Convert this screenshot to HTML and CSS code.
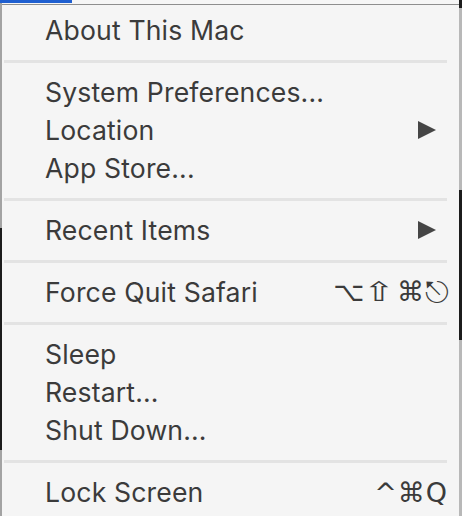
FILE: index.html
```html
<!DOCTYPE html>
<html lang="en">
<head>
<meta charset="utf-8">
<title>Apple Menu</title>
<link rel="stylesheet" href="styles.css">
</head>
<body>
<div class="topbar"><div class="apple-highlight"></div></div>
<div class="menu">
  <div class="item"><span class="label">About This Mac</span></div>
  <div class="sep"></div>
  <div class="item"><span class="label">System Preferences...</span></div>
  <div class="item"><span class="label">Location</span><span class="arrow"></span></div>
  <div class="item"><span class="label">App Store...</span></div>
  <div class="sep"></div>
  <div class="item"><span class="label">Recent Items</span><span class="arrow"></span></div>
  <div class="sep"></div>
  <div class="item"><span class="label">Force Quit Safari</span><span class="keys">⌥<span class="shift">⇧</span>⌘<span class="esc">⎋</span></span></div>
  <div class="sep"></div>
  <div class="item"><span class="label">Sleep</span></div>
  <div class="item"><span class="label">Restart...</span></div>
  <div class="item"><span class="label">Shut Down...</span></div>
  <div class="sep"></div>
  <div class="item"><span class="label">Lock Screen</span><span class="keys">^⌘Q</span></div>
</div>
</body>
</html>
```

FILE: styles.css
```css
html, body {
  margin: 0;
  padding: 0;
}

body {
  width: 462px;
  height: 516px;
  overflow: hidden;
  background:
    linear-gradient(to bottom, #a3a3a3 0, #a3a3a3 228px, #1c1c1c 228px, #1c1c1c 450px, #a3a3a3 450px) left top / 2px 100% no-repeat,
    linear-gradient(to bottom, #1c1c1c 0, #1c1c1c 8px, #b8b8b8 8px, #b8b8b8 190px, #1c1c1c 190px, #1c1c1c 340px, #b8b8b8 340px) right top / 3px 100% no-repeat,
    #f6f6f6;
  font-family: "Inter", "Liberation Sans", sans-serif;
  color: #3b3b3b;
}

.topbar {
  height: 4px;
}

.apple-highlight {
  width: 72px;
  height: 3px;
  background: #1f5fd0;
}

.menu {
  margin: 0 3px 0 2px;
  border-top: 1px solid #8e8e8e;
  background: #f5f5f5;
  padding: 6px 12px 5px 0;
  display: flex;
  flex-direction: column;
}

.item {
  height: 38px;
  display: flex;
  align-items: center;
  justify-content: space-between;
  padding-left: 43px;
}

.label {
  font-size: 26.6px;
  letter-spacing: 0.15px;
}

.arrow {
  width: 0;
  height: 0;
  border-top: 9.5px solid transparent;
  border-bottom: 9.5px solid transparent;
  border-left: 18px solid #454545;
  margin-right: 11px;
}

.keys {
  font-family: "DejaVu Sans", sans-serif;
  font-size: 27px;
  letter-spacing: 1px;
  color: #3b3b3b;
  margin-right: -1px;
}

.shift {
  display: inline-block;
  transform: scaleX(1.4);
  margin: 0 5px 0 3px;
}

.esc {
  display: inline-block;
  transform: scale(1.12);
  margin-left: 1px;
}

.sep {
  height: 3px;
  margin: 11px 0 10px 2px;
  background: #e3e3e3;
}
```
